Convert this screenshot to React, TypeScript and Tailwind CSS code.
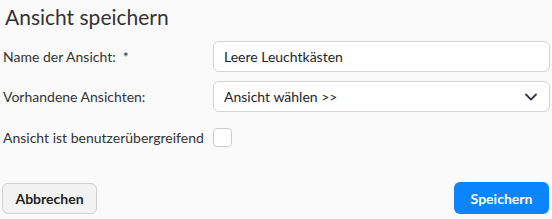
import React from "react";

export default function App() {
  return (
    <div className="w-[552px] h-[219px] bg-[#fafafa] text-[#333] font-['Lato','Open_Sans',sans-serif] overflow-hidden">
      <div className="pl-[5px] pt-[3px] text-[21px] leading-[28px] text-[#333]">Ansicht speichern</div>

      <div className="flex flex-col gap-[9px] mt-[10px] pr-[2px]">
        <div className="flex items-center">
          <label className="w-[213px] pl-[3px] text-[14px]">Name der Ansicht: &nbsp;*</label>
          <input
            defaultValue="Leere Leuchtkästen"
            className="flex-1 h-[31px] rounded-[6px] border border-[#d4d4d4] bg-white px-[10px] text-[14px] text-[#212529] outline-none"
          />
        </div>

        <div className="flex items-center">
          <label className="w-[213px] pl-[3px] text-[14px]">Vorhandene Ansichten:</label>
          <div className="flex-1 h-[31px] rounded-[6px] border border-[#d4d4d4] bg-white pl-[10px] pr-[12px] flex items-center justify-between text-[14px] text-[#212529]">
            <span>Ansicht wählen &gt;&gt;</span>
            <svg width="12" height="8" viewBox="0 0 12 8" fill="none">
              <path d="M1 1.5l5 5 5-5" stroke="#343a40" strokeWidth="1.8" strokeLinecap="round" strokeLinejoin="round" />
            </svg>
          </div>
        </div>

        <div className="flex items-center h-[32px]">
          <label className="w-[213px] pl-[3px] text-[14px] whitespace-nowrap">Ansicht ist benutzerübergreifend</label>
          <div className="w-[19px] h-[19px] rounded-[4px] border border-[#ccc] bg-white" />
        </div>
      </div>

      <div className="flex justify-between items-center mt-[29px] pl-[2px] pr-[3px]">
        <button className="w-[95px] h-[31px] rounded-[6px] border border-[#d0d0d0] bg-[#f2f2f2] text-[14px] font-bold text-[#222]">
          Abbrechen
        </button>
        <button className="w-[95px] h-[32px] rounded-[6px] bg-[#0a84ff] text-[14px] font-bold text-white">
          Speichern
        </button>
      </div>
    </div>
  );
}
